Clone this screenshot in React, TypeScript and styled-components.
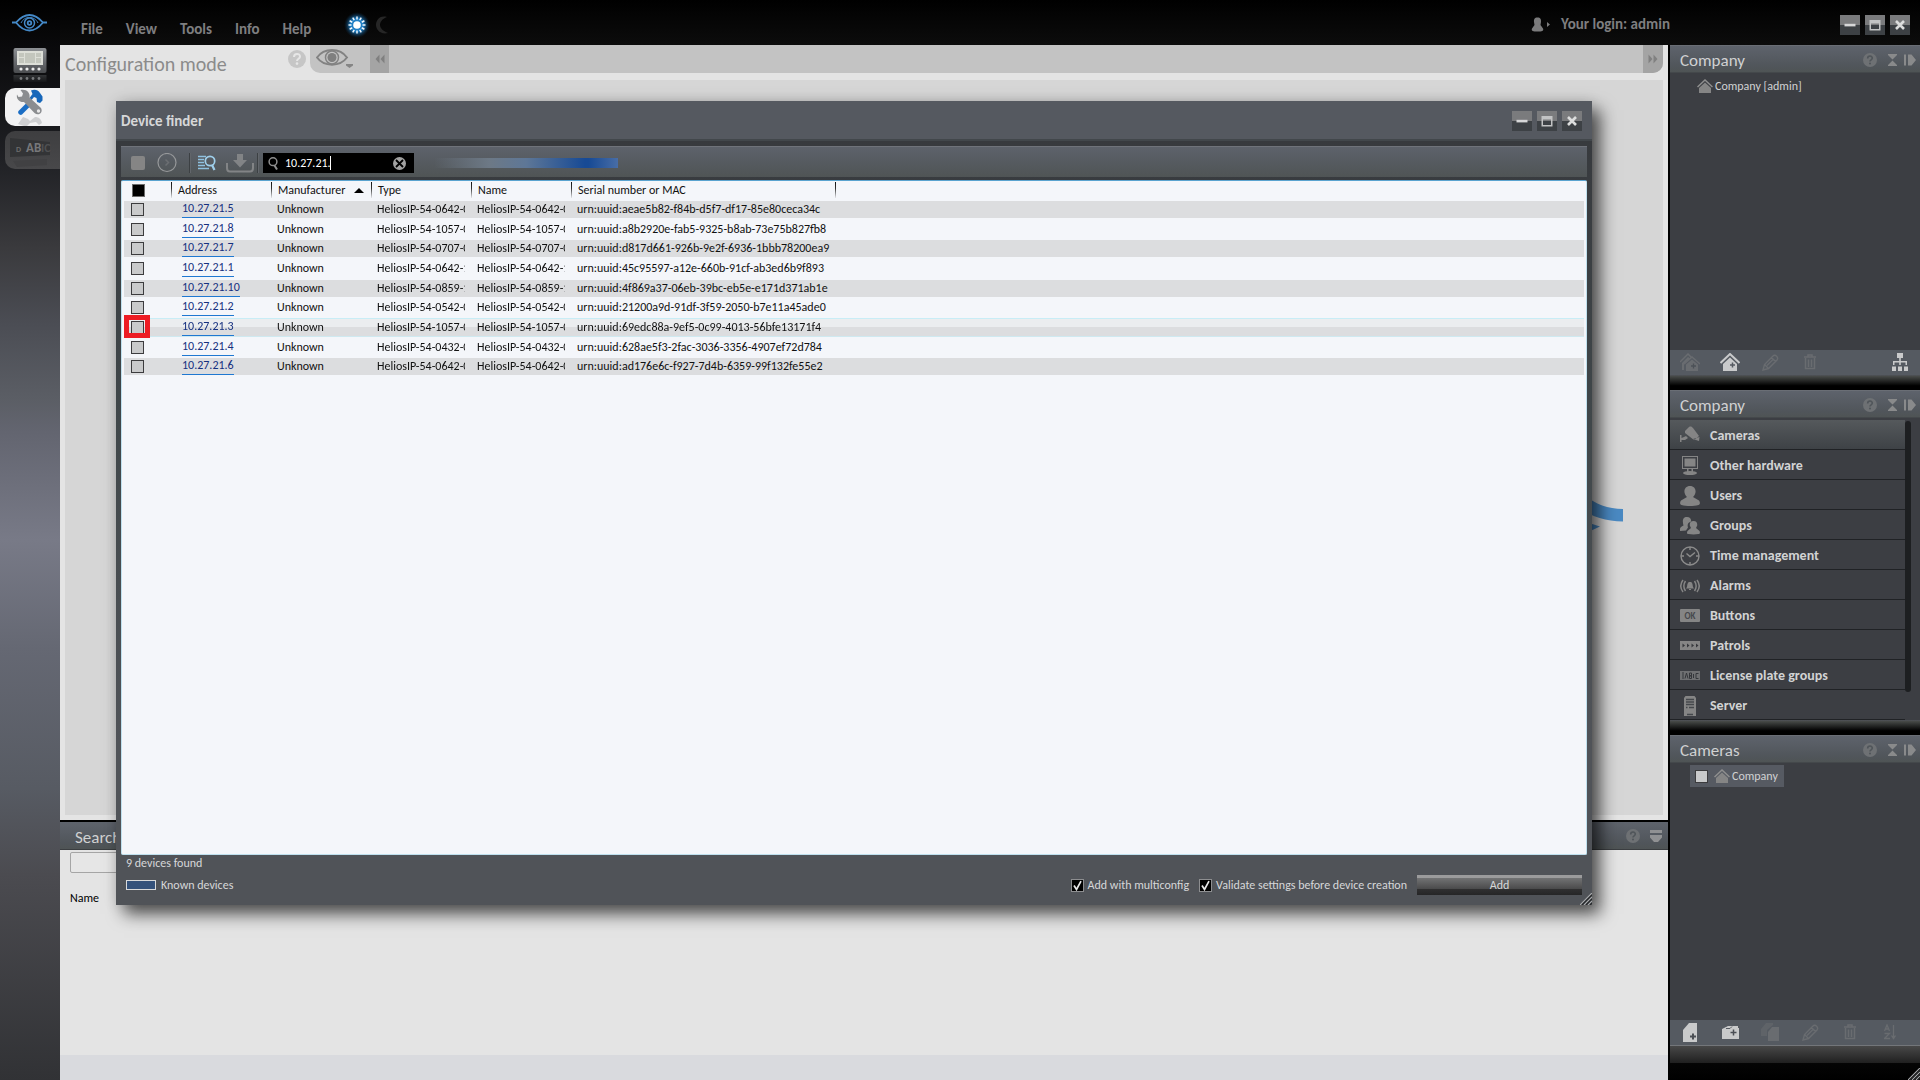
import React from 'react';
import styled, { createGlobalStyle, css } from 'styled-components';

const Global = createGlobalStyle`
  *, *::before, *::after { box-sizing: border-box; }
  html, body { margin: 0; }
  body, button, input, table {
    font-family: Carlito, Calibri, Lato, sans-serif;
    font-size: 12px;
    line-height: 16px;
  }
  body { background: #000; overflow: hidden; }
  button { padding: 0; border: 0; background: none; color: inherit; }
  svg { display: block; flex: none; }
  h1, h2, p, ul { margin: 0; padding: 0; font-weight: 400; }
`;

const barFill = 'linear-gradient(#5e636c, #50555a 80%, #4f5455)';

/* ---------- shell ---------- */

const Shell = styled.div`
  position: relative;
  display: grid;
  grid-template-columns: 60px minmax(0, 1fr) 252px;
  grid-template-rows: 45px minmax(0, 1fr);
  height: 100vh;
`;

const Sidebar = styled.nav`
  grid-row: 1 / 3;
  display: flex;
  flex-direction: column;
  align-items: flex-end;
  gap: 5px;
  padding-top: 14px;
  background: linear-gradient(
    #000 0%, #0b0b0d 5%, #202125 15%, #3a3a3d 23%, #4b4d54 30%, #5b5e65 37%,
    #636570 40%, #787a87 50%, #656873 60%, #575b63 73%, #4b4b50 81%, #313235 100%
  );
`;

const Logo = styled.div`
  display: flex;
  justify-content: center;
  width: 100%;
  padding-right: 2px;
  height: 26px;
`;

const ModeButton = styled.button<{ $tone: 'plain' | 'active' | 'dim' }>`
  display: flex;
  justify-content: center;
  width: 55px;
  height: 38px;
  border-radius: 10px 0 0 10px;
  padding-right: 6px;
  ${({ $tone }) => $tone === 'active' && css`background: #f2f2f3;`}
  ${({ $tone }) => $tone === 'dim' && css`background: linear-gradient(#3e3e40, #48484a);`}
  ${({ $tone }) => $tone === 'plain' && css`padding-top: 2px;`}
`;

const TopBar = styled.header`
  grid-column: 2 / 4;
  display: flex;
  align-items: center;
  padding: 0 10px 0 21px;
  background: linear-gradient(#000, #0c0c0c);
  color: #7e7e80;
`;

const Menu = styled.nav`
  display: flex;
  gap: 23px;
  padding-top: 12px;
`;

const MenuItem = styled.button`
  font-size: 15px;
  line-height: 18px;
  font-weight: 700;
`;

const DayNight = styled.div`
  display: flex;
  align-items: center;
  gap: 6px;
  margin-left: 33px;
  padding-top: 4px;
`;

const Login = styled.div`
  display: flex;
  align-items: center;
  gap: 10px;
  margin-left: auto;
  margin-right: 170px;
  padding-top: 3px;
  font-size: 15px;
  line-height: 18px;
  font-weight: 700;
`;

const WindowButtons = styled.div`
  display: flex;
  gap: 5px;
`;

const TopWindowButtons = styled(WindowButtons)`
  padding-top: 4px;
`;

const WindowButton = styled.button`
  display: grid;
  place-items: center;
  width: 20px;
  height: 20px;
  background: linear-gradient(#7a7b7d 0 50%, #3d4145 50% 100%);
`;

/* ---------- main area ---------- */

const Main = styled.main`
  display: grid;
  grid-template-rows: minmax(0, 1fr) 260px;
  background: #e4e4e4;
`;

const Stage = styled.section`
  display: flex;
  flex-direction: column;
  padding: 0 5px 5px;
`;

const StageBar = styled.div`
  display: flex;
  height: 35px;
`;

const StageTitle = styled.h1`
  width: 223px;
  padding-top: 7px;
  font-size: 20px;
  line-height: 24px;
  color: #8b8b8b;
`;

const StageHelp = styled.button`
  width: 22px;
  height: 28px;
`;

const StageTools = styled.div`
  display: flex;
  flex: 1;
  height: 28px;
  overflow: hidden;
  border-radius: 0 0 10px 10px;
  background: #c3c3c3;
`;

const EyeButton = styled.button`
  width: 60px;
  padding: 0 0 0 6px;
`;

const FoldButton = styled.button<{ $end?: boolean }>`
  display: grid;
  place-items: center;
  width: ${({ $end }) => ($end ? 20 : 19)}px;
  margin-left: ${({ $end }) => ($end ? 'auto' : '0')};
  background: #a4a4a4;
`;

const Canvas = styled.div`
  position: relative;
  flex: 1;
  background: #d6d6d6;
`;

const DiagramArrow = styled.svg`
  position: absolute;
  top: 415px;
  right: 40px;
`;

const SearchPanel = styled.section`
  display: flex;
  flex-direction: column;
  border-top: 2px solid #000;
`;

const SearchHeader = styled.header`
  display: flex;
  align-items: center;
  gap: 10px;
  height: 28px;
  padding: 0 6px 0 15px;
  border-bottom: 1px solid #3b3e41;
  background: ${barFill};
`;

const PanelTitle = styled.h2`
  flex: 1;
  padding-top: 4px;
  font-size: 17px;
  line-height: 20px;
  color: #d0d1d2;
`;

const SearchBody = styled.div`
  display: flex;
  flex: 1;
  flex-direction: column;
  align-items: flex-start;
  gap: 17px;
  padding: 2px 10px;
`;

const SearchField = styled.input`
  width: 300px;
  height: 21px;
  border: 1px solid #a5a5a5;
  border-radius: 2px;
  background: #e6e6e6;
`;

const StatusStrip = styled.div`
  height: 25px;
  background: #d9dade;
`;

/* ---------- right column ---------- */

const Aside = styled.aside`
  display: grid;
  grid-template-rows: repeat(3, minmax(0, 1fr));
  padding-left: 2px;
  color: #d0d1d2;
`;

const Panel = styled.section`
  display: flex;
  flex-direction: column;
  min-height: 0;
  background: #3c3e43;
`;

const PanelHeader = styled.header`
  display: flex;
  align-items: center;
  height: 28px;
  padding: 0 4px 0 10px;
  border-top: 1px solid #6a6e75;
  border-bottom: 1px solid #44484b;
  background: ${barFill};
`;

const PanelButtons = styled.div`
  display: flex;
  align-items: center;
  gap: 7px;
  padding-top: 2px;
  & > :first-child { margin-right: 4px; }
`;

const PanelBody = styled.div`
  flex: 1;
  min-height: 0;
  padding: 5px 0 0 27px;
`;

const CameraBody = styled(PanelBody)`
  padding: 2px 0 0 20px;
`;

const TreeNode = styled.div`
  display: flex;
  align-items: center;
  gap: 2px;
  height: 16px;
`;

const CameraNode = styled.label`
  display: inline-flex;
  align-items: center;
  gap: 2px;
  height: 22px;
  padding: 0 6px 0 5px;
  background: #565a62;
`;

const IconBar = styled.div`
  display: flex;
  align-items: center;
  height: 25px;
  background: #555a61;
`;

const IconSlot = styled.button<{ $last?: boolean; $off?: boolean }>`
  display: grid;
  place-items: center;
  width: 40px;
  height: 25px;
  padding-bottom: 1px;
  margin-left: ${({ $last }) => ($last ? 'auto' : '0')};
  color: ${({ $off }) => ($off ? '#696c70' : '#c9cacb')};
`;

const Splitter = styled.div`
  flex: none;
  height: 15px;
  background: linear-gradient(#50535a, #454846 10%, #000 72%);
`;

const Base = styled.div`
  position: relative;
  height: 35px;
  border-top: 1px solid #73767a;
  background: linear-gradient(#484848, #202020 17px, #050505 17px, #000);
`;

const ListWrap = styled.div`
  display: flex;
  flex: 1;
  min-height: 0;
  padding-top: 2px;
  overflow: hidden;
`;

const List = styled.ul`
  flex: 1;
  list-style: none;
`;

const Item = styled.li<{ $active?: boolean }>`
  display: flex;
  height: 30px;
  border-bottom: 1px solid #202225;
  background: ${({ $active }) => ($active ? 'linear-gradient(#55595c, #3e4246)' : 'none')};
`;

const ItemButton = styled.button`
  display: flex;
  flex: 1;
  align-items: center;
  gap: 10px;
  padding: 2px 0 0 10px;
  color: #d2d3d4;
  font-size: 14px;
  line-height: 18px;
  font-weight: 700;
`;

const Scrollbar = styled.div`
  width: 15px;
  padding-top: 1px;
  &::before {
    content: '';
    display: block;
    width: 6px;
    height: 271px;
    border-radius: 3px;
    background: #1d1f21;
  }
`;

/* ---------- device finder window ---------- */

const Dialog = styled.section`
  position: absolute;
  inset: 101px 328px 175px 116px;
  display: flex;
  flex-direction: column;
  background: linear-gradient(#36383c, #40474a 40%, #505358 80%);
  box-shadow: 8px 9px 16px rgba(0, 0, 0, 0.65), 0 0 14px rgba(0, 0, 0, 0.1);
  color: #d6d7d8;
`;

const DialogHeader = styled.header`
  display: flex;
  align-items: center;
  justify-content: space-between;
  height: 40px;
  padding: 2px 10px 0 5px;
  border-bottom: 2px solid #42474b;
  background: #555960;
`;

const DialogTitle = styled.h2`
  font-size: 15px;
  line-height: 20px;
  font-weight: 700;
`;

const FinderBar = styled.div`
  display: flex;
  align-items: center;
  height: 31px;
  margin: 5px 5px 3px;
  padding: 2px 10px 0;
  border-top: 1px solid #6f737a;
  background: linear-gradient(#5d626b, #4f5455);
`;

const ToolButton = styled.button<{ $width: number }>`
  display: grid;
  place-items: center;
  width: ${({ $width }) => $width}px;
  height: 24px;
`;

const ToolDivider = styled.span`
  width: 2px;
  height: 20px;
  background: linear-gradient(90deg, #3c4043 50%, #62666b 50%);
`;

const FilterBox = styled.div`
  position: relative;
  display: flex;
  align-items: center;
  width: 151px;
  height: 20px;
  margin-left: 4px;
  padding: 0 8px 0 5px;
  background: #000;
`;

const FilterInput = styled.input`
  flex: 1;
  min-width: 0;
  height: 18px;
  padding: 0 0 0 7px;
  border: 0;
  outline: 0;
  background: transparent;
  color: #fff;
  caret-color: transparent;
`;

const Caret = styled.span`
  position: absolute;
  top: 3px;
  left: 67px;
  width: 1px;
  height: 14px;
  background: #fff;
`;

const Progress = styled.div`
  width: 184px;
  height: 10px;
  margin-left: 20px;
  background: linear-gradient(90deg, transparent, #6d7986 30%, #5e7797 50%, #174a95 82%, #174a95 84%, #486da6);
`;

const TableFrame = styled.div`
  flex: 1;
  min-height: 0;
  margin: 0 5px;
  padding: 0 2px;
  border: 1px solid #bfe0ee;
  border-top-color: #5aa3cf;
  border-radius: 2px;
  background: #f4f6fa;
  color: #111;
`;

const Table = styled.table`
  width: 100%;
  table-layout: fixed;
  border-spacing: 0;
`;

const HeadCell = styled.th<{ $line?: boolean }>`
  height: 19px;
  padding: 0 7px 1px;
  text-align: left;
  font-weight: 400;
  line-height: 16px;
  background: ${({ $line }) =>
    $line ? 'linear-gradient(#111, #333 40%, #e4e6ea) 0 1px / 1px 16px no-repeat' : 'none'};
  &:first-child { padding-left: 8px; }
`;

const HeadContent = styled.span`
  display: flex;
  align-items: center;
  justify-content: space-between;
`;

const Row = styled.tr<{ $hover?: boolean }>`
  height: 20px;
  border-radius: 4px;
  &:nth-child(3n + 2) { height: 19px; }
  &:nth-child(odd) {
    background: linear-gradient(transparent 1px, #dcdddf 1px 18px, transparent 18px);
  }
  ${({ $hover }) => $hover && css`
    &&:nth-child(odd) {
      background: linear-gradient(
        #c8edf6 1px, #ebedef 1px 9px, #dcdddf 9px 18px, #cfe9f0 18px 19px, transparent 19px
      );
    }
  `}
`;

const Cell = styled.td`
  position: relative;
  padding: 0 6px 2px;
  line-height: 16px;
  white-space: nowrap;
`;

const Clip = styled.div`
  overflow: hidden;
`;

const AddressCell = styled(Cell)`
  padding: 0 0 1px 11px;
`;

const TickCell = styled(Cell)`
  padding: 0 0 1px 7px;
`;

const Address = styled.a`
  display: block;
  width: max-content;
  height: 17px;
  border-bottom: 1px solid #1f78d1;
  line-height: 15px;
  color: #16307f;
  text-decoration: none;
`;

const Marker = styled.span`
  position: absolute;
  top: -3px;
  left: 0;
  width: 26px;
  height: 23px;
  border: 5px solid #ed1c24;
`;

const Tick = styled.input<{ $fill?: string; $edge?: string }>`
  appearance: none;
  display: block;
  flex: none;
  width: 13px;
  height: 13px;
  margin: 0;
  border: 1px solid ${({ $edge }) => $edge ?? '#3c3c3e'};
  background: ${({ $fill }) => $fill ?? '#c9cacb'};
`;

const CameraTick = styled(Tick)`
  margin-right: 4px;
`;

const CheckWrap = styled.label`
  display: flex;
  align-items: center;
  gap: 4px;
`;

const CheckTick = styled(Tick)`
  &:checked {
    background: #000 url("data:image/svg+xml,%3Csvg xmlns='http://www.w3.org/2000/svg' viewBox='0 0 11 11'%3E%3Cpath d='M2 5.5l2.5 4L9 1.2' fill='none' stroke='%23e8e8e8' stroke-width='1.7'/%3E%3C/svg%3E");
  }
`;

const DialogFooter = styled.footer`
  display: flex;
  flex-direction: column;
  height: 50px;
  padding: 0 10px;
`;

const FooterRow = styled.div`
  display: flex;
  align-items: center;
  gap: 10px;
  height: 20px;
  margin-top: 4px;
`;

const Swatch = styled.span`
  width: 30px;
  height: 10px;
  border: 1px solid #d9dadb;
  background: #35527b;
`;

const Legend = styled.div`
  display: flex;
  flex: 1;
  align-items: center;
  gap: 5px;
`;

const AddButton = styled.button`
  width: 165px;
  height: 20px;
  background: linear-gradient(#9b9b9c 3px, #727374 3px, #4a4a4b 14px, #303031 14px, #262627);
`;

const Grip = styled.svg`
  position: absolute;
  right: 0;
  bottom: 0;
`;

/* ---------- icons ---------- */

const EyeLogo = () => (
  <svg width="35" height="18" viewBox="0 0 35 18" fill="none" stroke="#4489c8" strokeWidth="1.8">
    <path d="M0 8.5h4C8 4 12 1 17.500 1S27 4 31 8.500h4M4 8.500C8 13.500 12 16.500 17.500 16.500S27 13.500 31 8.500" />
    <path d="M9 9c2-4 5-5.500 8.500-5.500M26 9c-2-4-5-5.500-8.500-5.500" strokeWidth="1" />
    <circle cx="17.500" cy="9" r="5" strokeWidth="1.500" />
    <circle cx="17.500" cy="9" r="1.800" strokeWidth="1.800" />
  </svg>
);

const MonitorIcon = () => (
  <svg width="34" height="36" viewBox="0 0 34 36">
    <defs>
      <linearGradient id="mon" x1="0" y1="0" x2="0" y2="1">
        <stop offset="0" stopColor="#8d9094" />
        <stop offset="1" stopColor="#4a4c4f" />
      </linearGradient>
      <linearGradient id="monRef" x1="0" y1="0" x2="0" y2="1">
        <stop offset="0" stopColor="#3a3c3e" />
        <stop offset="1" stopColor="#17181a" />
      </linearGradient>
    </defs>
    <rect x="0.500" y="1" width="33" height="25" rx="2" fill="url(#mon)" />
    <rect x="4" y="4" width="26" height="14" fill="#dddfd8" />
    <path d="M6 6h5v4H6zM6 11h5v5H6zM12 6h10v10H12zM23 6h5v4h-5zM23 11h5v5h-5z" fill="#c3c6bd" />
    <path d="M0.500 28h33v7h-33z" fill="url(#monRef)" opacity="0.800" />
    {[8, 14, 20, 26].map((x) => (
      <g key={x}>
        <circle cx={x} cy="22" r="1.600" fill="#e9e9e9" />
        <circle cx={x} cy="31.500" r="1.400" fill="#77797b" />
      </g>
    ))}
  </svg>
);

const ToolsIcon = () => (
  <svg width="28" height="38" viewBox="0 0 28 38">
    <path d="M2.500 23L13 12.500l3.500 3.500L6 26.500c-2 1.500-5-1.500-3.500-3.500z" fill="#1a6dc4" />
    <path d="M15 2.500c4-1.500 7-0.500 9 2.500l2.500 3.500v4L24 15l-3-1-0.500-4-2.500-1-2.500 3-2-2 3-4z" fill="#1767ba" />
    <path d="M4.500 2l2.500 3.500-1 3-3.500 0.500L1 6.500C0 11 3.500 14.500 8 14L18.500 25c4 3.500 9-0.500 6.500-5L13.500 9.500C14.500 4.500 10 0.500 4.500 2z" fill="#8b8d90" />
    <circle cx="22.500" cy="23" r="1.700" fill="#e8e8e8" />
    <path d="M2 36l5-7 5 2 2 2 5-4c4 0 6 2 7 6l-3 2-3-3-6 1-3 3H8z" fill="#bfc0c2" opacity="0.700" />
  </svg>
);

const PlateIcon = () => (
  <svg width="42" height="38" viewBox="0 0 42 38">
    <path d="M1 7l40 4v13L1 26z" fill="#333436" />
    <g fontFamily="Carlito, Calibri, sans-serif" fontWeight="700">
      <text x="7" y="21" fontSize="8" fill="#6b6b6b">D</text>
      <text x="17" y="21" fontSize="13" fill="#77787a">AB</text>
      <text x="32" y="21" fontSize="12" fill="#4f5052">IC</text>
    </g>
    <path d="M4 30l34-2v6l-30 2z" fill="#414143" />
  </svg>
);

const SunIcon = () => (
  <svg width="26" height="26" viewBox="0 0 26 26">
    <defs>
      <radialGradient id="glow">
        <stop offset="0.500" stopColor="#1e7ec4" />
        <stop offset="1" stopColor="#0a2c48" stopOpacity="0" />
      </radialGradient>
    </defs>
    <circle cx="13" cy="13" r="13" fill="url(#glow)" />
    <circle cx="13" cy="13" r="3.800" fill="#fff" />
    {Array.from({ length: 12 }, (_, i) => (
      <path key={i} d="M13 4.500v3" stroke="#f3f8fc" strokeWidth="1.500" transform={`rotate(${i * 30} 13 13)`} />
    ))}
  </svg>
);

const MoonIcon = () => (
  <svg width="13" height="18" viewBox="0 0 13 18">
    <path d="M11 1C3-1 0 5 0 9s4 10 12 8C7 15 4 12 4 9s2-6 7-8z" fill="#262626" />
  </svg>
);

const LoginIcon = () => (
  <svg width="20" height="15" viewBox="0 0 20 15" fill="#7b7b7c">
    <path d="M6.500 0.500c3 0 3.800 2 3.500 4.500L9.500 8l2.500 3.500c1 2.500-1 3-5.500 3s-6.500-0.500-5.500-3L3.500 8 3 5c-0.300-2.500 0.500-4.500 3.500-4.500z" />
    <path d="M16 5l3 2.500-3 2.500z" />
  </svg>
);

const MinIcon = () => (
  <svg width="14" height="14" viewBox="0 0 14 14"><path d="M1.500 5.800h11v2.600h-11z" fill="#d6d7d8" /></svg>
);
const MaxIcon = () => (
  <svg width="14" height="14" viewBox="0 0 14 14">
    <path d="M1.500 2h11v10.500h-11zM3 5.500v5.500h8V5.500z" fill="#c2c3c4" fillRule="evenodd" />
  </svg>
);
const CloseIcon = () => (
  <svg width="14" height="14" viewBox="0 0 14 14"><path d="M3 3l8 8M11 3l-8 8" stroke="#dcdddd" strokeWidth="2.600" /></svg>
);

const HelpIcon = ({ size = 14, disc = '#6e7174', mark = '#50555a' }) => (
  <svg width={size} height={size} viewBox="0 0 18 18">
    <circle cx="9" cy="9" r="9" fill={disc} />
    <path d="M6 7c0-4 6-4 6-0.500C12 9 9 8.500 9 11" fill="none" stroke={mark} strokeWidth="2" />
    <circle cx="9" cy="13.600" r="1.300" fill={mark} />
  </svg>
);

const EyeIcon = () => (
  <svg width="38" height="20" viewBox="0 0 38 20">
    <path d="M1 8.500C8-1.500 24-1.500 31 8.500 24 18 8 18 1 8.500z" fill="none" stroke="#828282" strokeWidth="2" />
    <circle cx="16" cy="8.500" r="6.500" fill="none" stroke="#828282" strokeWidth="1.500" />
    <circle cx="16" cy="8.500" r="4.500" fill="#7f7f7f" />
    <path d="M30 15h7v1.500L33.500 19 30 16.500z" fill="#858585" />
  </svg>
);

const FoldIcon = ({ right = false }) => (
  <svg width="10" height="10" viewBox="0 0 10 10" fill="#808080">
    <path d={right ? 'M0.500 0.500L4.500 5 0.500 9.500zM5.500 0.500L9.500 5 5.500 9.500z' : 'M4.500 0.500L0.500 5 4.500 9.500zM9.500 0.500L5.500 5 9.500 9.500z'} />
  </svg>
);

const HourglassIcon = () => (
  <svg width="9" height="12" viewBox="0 0 9 12" fill="#898a8b">
    <path d="M0 0h9v1L4.500 5.500 0 1zM0 12h9v-1L4.500 6.500 0 11z" />
  </svg>
);
const DockIcon = () => (
  <svg width="12" height="12" viewBox="0 0 12 12" fill="#898a8b">
    <path d="M0 0.500h2v11H0zM4 0.500h2v11H4zM6 0.500h1.500L12 6l-4.500 5.500H6z" />
  </svg>
);
const DropIcon = () => (
  <svg width="12" height="12" viewBox="0 0 12 12" fill="#909193">
    <path d="M0 0h12v3H0zM0 5h12v2.500L8 12H4L0 7.500z" />
  </svg>
);

const HouseIcon = () => (
  <svg width="16" height="14" viewBox="0 0 16 14">
    <path d="M0.500 8L8 1l7.500 7" fill="none" stroke="#8f8f8f" strokeWidth="1.500" />
    <path d="M8 3.500l6 5.500v5H2V9z" fill="#858585" />
  </svg>
);
const HouseAddIcon = () => (
  <svg width="20" height="18" viewBox="0 0 20 18">
    <path d="M0.500 10L10 1l9.500 9" fill="none" stroke="currentColor" strokeWidth="2" />
    <path d="M10 4.500l7 6.500v7H3v-7z" fill="currentColor" />
    <path d="M12.500 9.500v5M10 12h5" stroke="#555a61" strokeWidth="1.500" />
  </svg>
);
const HousesIcon = () => (
  <svg width="20" height="18" viewBox="0 0 20 18">
    <path d="M0 9l8-8 4 4M4 11l8-7 8 7" fill="none" stroke="currentColor" strokeWidth="1.500" />
    <path d="M2 10l6-6 2 1.500-6 6V17H2zM12 6.500l6 5V18H6v-6.500z" fill="currentColor" />
    <path d="M13.500 10.500v5M11 13h5" stroke="#4c5157" strokeWidth="1.300" />
  </svg>
);
const PencilIcon = () => (
  <svg width="17" height="17" viewBox="0 0 17 17" fill="none" stroke="currentColor" strokeWidth="1.400">
    <path d="M1 16l1.500-5.500L11 2c2-2.500 6 1.500 4 4l-8.500 8.500zM9.500 3.500l4 4M3 11l3 3M5 11.500l6.500-6.500" />
  </svg>
);
const TrashIcon = () => (
  <svg width="12" height="16" viewBox="0 0 12 16" fill="none" stroke="currentColor" strokeWidth="1.500">
    <path d="M0 3h12M4 2.500V1h4v1.500M1.500 4v10.500h9V4M4.500 5.500v7.500M7.500 5.500v7.500" />
  </svg>
);
const OrgIcon = () => (
  <svg width="16" height="18" viewBox="0 0 16 18" fill="currentColor">
    <path d="M5 0h6v5H8.800v3H15v4h-1.500V9.500H8.800V12H7.200V9.500H2.500V12H1V8h6.200V5H5z" />
    <path d="M0 13.500h4V18H0zM6 13.500h4V18H6zM12 13.500h4V18h-4z" />
  </svg>
);
const PageAddIcon = () => (
  <svg width="14" height="19" viewBox="0 0 14 19">
    <path d="M0 7l6-7h8v19H0z" fill="currentColor" />
    <path d="M10 10.500v6M7 13.500h6" stroke="#4b4f55" strokeWidth="2" />
  </svg>
);
const FolderAddIcon = () => (
  <svg width="17" height="14" viewBox="0 0 17 14">
    <path d="M0 4l6-3h10v2h1v11H0z" fill="currentColor" />
    <path d="M4 3.500h4l2-2" fill="none" stroke="#555a61" />
    <path d="M11.500 4.500v6M8.500 7.500h6" stroke="#4b4f55" strokeWidth="1.500" />
  </svg>
);
const PagesIcon = () => (
  <svg width="18" height="18" viewBox="0 0 18 18" fill="currentColor">
    <path d="M0 6l5-6h7v2l-6 5v6H0z" opacity="0.500" />
    <path d="M7 9l4-5h7v14H7z" />
  </svg>
);
const SortIcon = () => (
  <svg width="12" height="16" viewBox="0 0 12 16" fill="none" stroke="currentColor" strokeWidth="1.300">
    <path d="M0.500 7L3 1l2.500 6M1.500 5h3M0.500 9.500h5l-5 5h5.500M9.500 1v13M7.500 11.500l2 3 2-3" />
  </svg>
);

const itemIcons: Record<string, React.ReactNode> = {
  camera: (
    <g>
      <path d="M5 5l4-4c2-1 3 0 4 1l6 8-5 4-9-7zM13 13l6 2 0.500-4z" />
      <path d="M0 9h1.500v3L4 11l2-1 2 2-3 2H1.500v2H0z" />
    </g>
  ),
  hardware: (
    <g>
      <path d="M2 0h16v13H2zM3 1v11h14V1z" fillRule="evenodd" />
      <path d="M4.500 2.500h11v8h-11zM7 13h1.500v3H7zM11.500 13H13v3h-1.500z" />
      <ellipse cx="10" cy="17" rx="7" ry="2" />
    </g>
  ),
  user: <path d="M10 0c4 0 6 3 5.500 6.500-0.500 2-1.500 3.500-2.500 4.500l6 3.500c1.500 2 1 4-0.500 4.500-5 1.300-12 1.300-17 0-1.500-0.500-2-2.500-0.500-4.500l6-3.500c-1-1-2-2.500-2.500-4.500C4 3 6 0 10 0z" />,
  group: (
    <g>
      <path d="M7 1c3 0 4.500 2 4 4.500-3 1-4 3-3 6l-2 3-6 0.500c-0.500-2 0-4 3.500-5.500C2.500 6 2 1 7 1z" />
      <path d="M13.500 5c3 0 4 2 3.700 4.500L16 12l3.500 3c1 2 0 3-1 3-3 0.600-7 0.600-10 0-1.500 0-2-1-1-3l3.500-3-1.200-2.500C9.500 7 10.500 5 13.500 5z" />
    </g>
  ),
  clock: (
    <g fill="none" stroke="#8b8b8b" strokeWidth="1.400">
      <circle cx="10" cy="10" r="9" />
      <path d="M6.500 7.500L10 10.500l5-4M10 1v3M10 16v3M1 10h3M16 10h3" />
    </g>
  ),
  alarm: (
    <g>
      <path d="M10 6c2.500 0 2.500 2 3 5l1 1.500H6L7 11c0.500-3 0.500-5 3-5zM9 13h2v1H9z" />
      <path d="M5.500 5c-2 3-2 7 0 10M3 4c-3 4-3 8 0 12M14.500 5c2 3 2 7 0 10M17 4c3 4 3 8 0 12" fill="none" stroke="#858585" strokeWidth="1.500" />
    </g>
  ),
  button: (
    <g>
      <rect y="3" width="20" height="13" rx="1" />
      <text x="10" y="12.500" textAnchor="middle" fontSize="9" fontWeight="700" fill="#45484c" fontFamily="Carlito, Calibri, sans-serif">OK</text>
    </g>
  ),
  patrol: (
    <g>
      <rect y="5" width="20" height="9" />
      <path d="M2.500 7.500l2.500 2-2.500 2zM7 7.500l2.500 2-2.500 2zM11.500 7.500l2.500 2-2.500 2zM16 7.500l2.500 2-2.500 2z" fill="#36383c" />
    </g>
  ),
  plate: (
    <g>
      <rect y="5" width="20" height="9" fill="#6f7072" />
      <path d="M3 6v7M5 12.500l1.500-5.500L8 12.500M9.500 7v5.500h2v-2.700h-2 2V7h-2M13.500 8v4M18.500 7.500h-2.500v5h2.500" fill="none" stroke="#34363a" />
    </g>
  ),
  server: (
    <g>
      <path d="M4 2l1.500-2h9L16 2v18H4z" />
      <path d="M6 3.500h8M6 6h8M6 8.500h8M9 11.500h5M6 11.500h1.500M7 18.500h6" stroke="#45484c" strokeWidth="1.300" />
    </g>
  ),
};

const ItemIcon = ({ name }: { name: string }) => (
  <svg width="20" height="20" viewBox="0 0 20 20" fill="#858585">{itemIcons[name]}</svg>
);

const StopIcon = () => (
  <svg width="14" height="14" viewBox="0 0 14 14"><rect width="14" height="14" rx="2" fill="#858585" /></svg>
);
const NextIcon = () => (
  <svg width="20" height="20" viewBox="0 0 20 20" fill="none">
    <circle cx="10" cy="9.500" r="9" stroke="#96989a" strokeWidth="1.200" />
    <path d="M8.500 6.500l3 3-3 3" stroke="#6b6e72" strokeWidth="1.500" />
  </svg>
);
const SearchListIcon = () => (
  <svg width="18" height="16" viewBox="0 0 18 16" fill="none">
    <path d="M0 1.500h8M0 4.500h6M0 7.500h6M0 10.500h7M0 13.500h11" stroke="#8fc1e0" strokeWidth="1.300" />
    <circle cx="12" cy="6" r="4.700" stroke="#9fcfeb" strokeWidth="1.700" />
    <path d="M14 10l2.500 5" stroke="#9fcfeb" strokeWidth="2.200" />
  </svg>
);
const DownloadIcon = () => (
  <svg width="28" height="19" viewBox="0 0 28 19">
    <path d="M11 0h6v6h4l-7 7.500L7 6h4z" fill="#828486" />
    <path d="M1 9v5c0 2 1 3.500 3 3.500h20c2 0 3-1.500 3-3.500V9" fill="none" stroke="#828486" strokeWidth="2" />
  </svg>
);
const MagnifierIcon = () => (
  <svg width="10" height="13" viewBox="0 0 10 13" fill="none" stroke="#8e8e8e">
    <circle cx="5" cy="4.700" r="3.900" strokeWidth="1.500" />
    <path d="M6.500 8.500L9 12.500" strokeWidth="2" />
  </svg>
);
const ClearIcon = () => (
  <svg width="13" height="13" viewBox="0 0 13 13">
    <circle cx="6.500" cy="6.500" r="6.500" fill="#a2a2a2" />
    <path d="M3 3l7 7M10 3l-7 7" stroke="#000" strokeWidth="1.800" />
  </svg>
);
const SortArrow = () => (
  <svg width="10" height="5" viewBox="0 0 10 5"><path d="M0 5l5-5 5 5z" fill="#000" /></svg>
);

const GripLines = () => (
  <Grip width="12" height="12" viewBox="0 0 12 12">
    <path d="M0 12L12 0M4 12l8-8M8 12l4-4" stroke="#a9abad" strokeWidth="1.200" />
    <path d="M2 12L12 2M6 12l6-6M10 12l2-2" stroke="#26282a" strokeWidth="1.200" />
  </Grip>
);

/* ---------- data ---------- */

const devices = [
  ['10.27.21.5', 'HeliosIP-54-0642-0', 'urn:uuid:aeae5b82-f84b-d5f7-df17-85e80ceca34c'],
  ['10.27.21.8', 'HeliosIP-54-1057-0', 'urn:uuid:a8b2920e-fab5-9325-b8ab-73e75b827fb8'],
  ['10.27.21.7', 'HeliosIP-54-0707-0', 'urn:uuid:d817d661-926b-9e2f-6936-1bbb78200ea9'],
  ['10.27.21.1', 'HeliosIP-54-0642-1', 'urn:uuid:45c95597-a12e-660b-91cf-ab3ed6b9f893'],
  ['10.27.21.10', 'HeliosIP-54-0859-1', 'urn:uuid:4f869a37-06eb-39bc-eb5e-e171d371ab1e'],
  ['10.27.21.2', 'HeliosIP-54-0542-0', 'urn:uuid:21200a9d-91df-3f59-2050-b7e11a45ade0'],
  ['10.27.21.3', 'HeliosIP-54-1057-0', 'urn:uuid:69edc88a-9ef5-0c99-4013-56bfe13171f4'],
  ['10.27.21.4', 'HeliosIP-54-0432-0', 'urn:uuid:628ae5f3-2fac-3036-3356-4907ef72d784'],
  ['10.27.21.6', 'HeliosIP-54-0642-0', 'urn:uuid:ad176e6c-f927-7d4b-6359-99f132fe55e2'],
];

const items = [
  ['camera', 'Cameras'],
  ['hardware', 'Other hardware'],
  ['user', 'Users'],
  ['group', 'Groups'],
  ['clock', 'Time management'],
  ['alarm', 'Alarms'],
  ['button', 'Buttons'],
  ['patrol', 'Patrols'],
  ['plate', 'License plate groups'],
  ['server', 'Server'],
];

/* ---------- parts ---------- */

const WindowControls = () => (
  <>
    <WindowButton aria-label="Minimize"><MinIcon /></WindowButton>
    <WindowButton aria-label="Maximize"><MaxIcon /></WindowButton>
    <WindowButton aria-label="Close"><CloseIcon /></WindowButton>
  </>
);

const SideHeader = ({ title }: { title: string }) => (
  <PanelHeader>
    <PanelTitle>{title}</PanelTitle>
    <PanelButtons>
      <button aria-label="Help"><HelpIcon /></button>
      <button aria-label="Collapse"><HourglassIcon /></button>
      <button aria-label="Dock"><DockIcon /></button>
    </PanelButtons>
  </PanelHeader>
);

const DeviceFinder = () => (
  <Dialog role="dialog" aria-label="Device finder">
    <DialogHeader>
      <DialogTitle>Device finder</DialogTitle>
      <WindowButtons><WindowControls /></WindowButtons>
    </DialogHeader>
    <FinderBar>
      <ToolButton $width={14} aria-label="Stop"><StopIcon /></ToolButton>
      <ToolButton $width={44} aria-label="Next"><NextIcon /></ToolButton>
      <ToolDivider aria-hidden />
      <ToolButton $width={32} aria-label="Search devices"><SearchListIcon /></ToolButton>
      <ToolButton $width={34} aria-label="Import"><DownloadIcon /></ToolButton>
      <ToolDivider aria-hidden />
      <FilterBox>
        <MagnifierIcon />
        <FilterInput aria-label="Filter" defaultValue="10.27.21." autoFocus />
        <Caret />
        <button aria-label="Clear"><ClearIcon /></button>
      </FilterBox>
      <Progress />
    </FinderBar>
    <TableFrame>
      <Table>
        <colgroup>
          <col style={{ width: 47 }} />
          <col style={{ width: 100 }} />
          <col style={{ width: 100 }} />
          <col style={{ width: 100 }} />
          <col style={{ width: 100 }} />
          <col style={{ width: 264 }} />
          <col />
        </colgroup>
        <thead>
          <tr>
            <HeadCell><Tick type="checkbox" aria-label="Select all" $fill="#000" $edge="#6d6d6d" /></HeadCell>
            <HeadCell $line>Address</HeadCell>
            <HeadCell $line><HeadContent>Manufacturer <SortArrow /></HeadContent></HeadCell>
            <HeadCell $line>Type</HeadCell>
            <HeadCell $line>Name</HeadCell>
            <HeadCell $line>Serial number or MAC</HeadCell>
            <HeadCell $line />
          </tr>
        </thead>
        <tbody>
          {devices.map(([address, type, serial]) => {
            const marked = address === '10.27.21.3';
            return (
              <Row key={address} $hover={marked}>
                <TickCell>
                  <Tick type="checkbox" aria-label={`Select ${address}`} />
                  {marked && <Marker />}
                </TickCell>
                <AddressCell><Address href={`http://${address}`}>{address}</Address></AddressCell>
                <Cell>Unknown</Cell>
                <Cell><Clip>{type}</Clip></Cell>
                <Cell><Clip>{type}</Clip></Cell>
                <Cell>{serial}</Cell>
                <Cell />
              </Row>
            );
          })}
        </tbody>
      </Table>
    </TableFrame>
    <DialogFooter>
      <p>9 devices found</p>
      <FooterRow>
        <Legend><Swatch />Known devices</Legend>
        <CheckWrap><CheckTick type="checkbox" defaultChecked $edge="#8d8e90" />Add with multiconfig</CheckWrap>
        <CheckWrap><CheckTick type="checkbox" defaultChecked $edge="#8d8e90" />Validate settings before device creation</CheckWrap>
        <AddButton>Add</AddButton>
      </FooterRow>
    </DialogFooter>
    <GripLines />
  </Dialog>
);

export default function App() {
  return (
    <Shell>
      <Global />
      <Sidebar>
        <Logo><EyeLogo /></Logo>
        <ModeButton $tone="plain" aria-label="Live view"><MonitorIcon /></ModeButton>
        <ModeButton $tone="active" aria-label="Configuration"><ToolsIcon /></ModeButton>
        <ModeButton $tone="dim" aria-label="License plates"><PlateIcon /></ModeButton>
      </Sidebar>
      <TopBar>
        <Menu>
          {['File', 'View', 'Tools', 'Info', 'Help'].map((m) => <MenuItem key={m}>{m}</MenuItem>)}
        </Menu>
        <DayNight>
          <button aria-label="Day mode"><SunIcon /></button>
          <button aria-label="Night mode"><MoonIcon /></button>
        </DayNight>
        <Login><LoginIcon />Your login: admin</Login>
        <TopWindowButtons><WindowControls /></TopWindowButtons>
      </TopBar>

      <Main>
        <Stage>
          <StageBar>
            <StageTitle>Configuration mode</StageTitle>
            <StageHelp aria-label="Help"><HelpIcon size={18} disc="#c6c6c6" mark="#e6e6e6" /></StageHelp>
            <StageTools>
              <EyeButton aria-label="Views"><EyeIcon /></EyeButton>
              <FoldButton aria-label="Collapse left"><FoldIcon /></FoldButton>
              <FoldButton $end aria-label="Expand right"><FoldIcon right /></FoldButton>
            </StageTools>
          </StageBar>
          <Canvas>
            <DiagramArrow width="43" height="40" viewBox="0 0 43 40" fill="#4a89c2">
              <path d="M0 -4C12 8 26 14 43 14v12.500C26 26 10 22 0 12zM6 27l14 4.500L6 38z" />
            </DiagramArrow>
          </Canvas>
        </Stage>
        <SearchPanel>
          <SearchHeader>
            <PanelTitle>Search</PanelTitle>
            <button aria-label="Help"><HelpIcon /></button>
            <button aria-label="Collapse"><DropIcon /></button>
          </SearchHeader>
          <SearchBody>
            <SearchField aria-label="Search" />
            <p>Name</p>
          </SearchBody>
          <StatusStrip />
        </SearchPanel>
      </Main>

      <Aside>
        <Panel>
          <SideHeader title="Company" />
          <PanelBody>
            <TreeNode><HouseIcon />Company [admin]</TreeNode>
          </PanelBody>
          <IconBar>
            <IconSlot $off aria-label="Add branch"><HousesIcon /></IconSlot>
            <IconSlot aria-label="Add company"><HouseAddIcon /></IconSlot>
            <IconSlot $off aria-label="Edit"><PencilIcon /></IconSlot>
            <IconSlot $off aria-label="Delete"><TrashIcon /></IconSlot>
            <IconSlot $last aria-label="Hierarchy"><OrgIcon /></IconSlot>
          </IconBar>
          <Splitter />
        </Panel>
        <Panel>
          <SideHeader title="Company" />
          <ListWrap>
            <List>
              {items.map(([icon, label], i) => (
                <Item key={label} $active={i === 0}>
                  <ItemButton><ItemIcon name={icon} />{label}</ItemButton>
                </Item>
              ))}
            </List>
            <Scrollbar />
          </ListWrap>
          <Splitter />
        </Panel>
        <Panel>
          <SideHeader title="Cameras" />
          <CameraBody>
            <CameraNode>
              <CameraTick type="checkbox" />
              <HouseIcon />
              Company
            </CameraNode>
          </CameraBody>
          <IconBar>
            <IconSlot aria-label="Add camera"><PageAddIcon /></IconSlot>
            <IconSlot aria-label="Add folder"><FolderAddIcon /></IconSlot>
            <IconSlot $off aria-label="Duplicate"><PagesIcon /></IconSlot>
            <IconSlot $off aria-label="Edit"><PencilIcon /></IconSlot>
            <IconSlot $off aria-label="Delete"><TrashIcon /></IconSlot>
            <IconSlot $off aria-label="Sort"><SortIcon /></IconSlot>
          </IconBar>
          <Base><GripLines /></Base>
        </Panel>
      </Aside>

      <DeviceFinder />
    </Shell>
  );
}
